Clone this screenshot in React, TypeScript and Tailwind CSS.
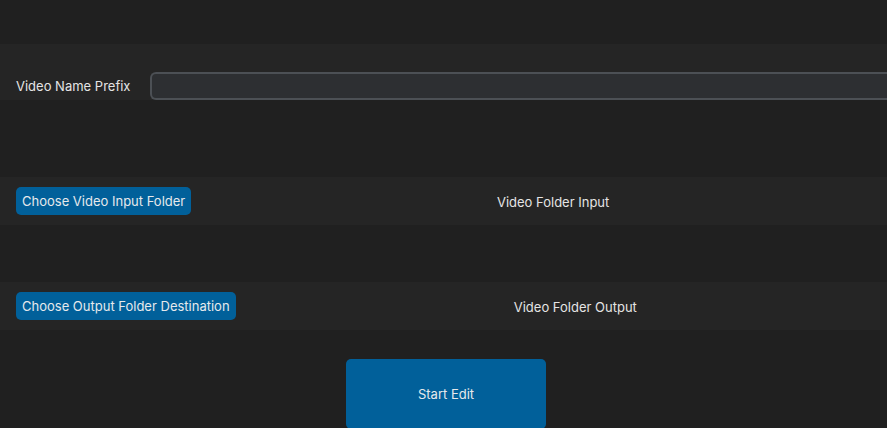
import React, { useState } from 'react';

const font = { fontFamily: 'Inter, "Noto Sans", sans-serif' };

const FolderRow: React.FC<{ buttonLabel: string; value: string }> = ({ buttonLabel, value }) => (
  <div className="flex h-[48px] items-center bg-[#252525] px-4">
    <button className="h-[28px] shrink-0 rounded-[5px] bg-[#01609a] px-[6px] pt-[2px] text-[13px] text-[#e6e9ec]">
      {buttonLabel}
    </button>
    <span className="ml-[44px] flex-1 pt-[3px] text-center text-[13px] text-[#e4e4e4]">{value}</span>
  </div>
);

const App: React.FC = () => {
  const [prefix, setPrefix] = useState('');

  return (
    <div className="h-[428px] w-[887px] overflow-hidden bg-[#202020]" style={font}>
      <div className="h-[44px]" />
      <div className="flex h-[56px] items-end bg-[#252525] pl-4">
        <label className="mb-[4px] w-[134px] shrink-0 text-[13px] text-[#e4e4e4]">Video Name Prefix</label>
        <input
          value={prefix}
          onChange={(e) => setPrefix(e.target.value)}
          className="-mr-4 h-[28px] flex-1 rounded-l-[6px] border-2 border-r-0 border-[#4c5055] bg-[#2d2f32] px-2 text-[13px] text-white outline-none"
        />
      </div>
      <div className="h-[77px]" />
      <FolderRow buttonLabel="Choose Video Input Folder" value="Video Folder Input" />
      <div className="h-[57px]" />
      <FolderRow buttonLabel="Choose Output Folder Destination" value="Video Folder Output" />
      <div className="flex justify-center pt-[29px] pl-[5px]">
        <button className="h-[70px] w-[200px] rounded-[5px] bg-[#01609a] pt-[2px] text-[13px] text-[#e6e9ec]">Start Edit</button>
      </div>
    </div>
  );
};

export default App;
